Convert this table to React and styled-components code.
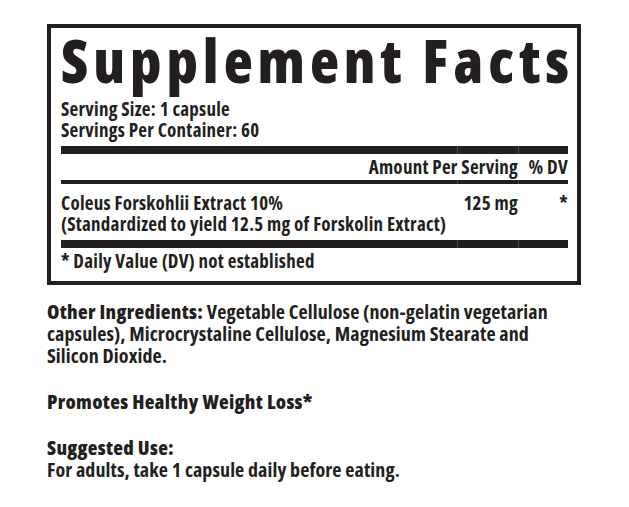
import React from 'react'
import styled, {createGlobalStyle} from 'styled-components'

const ink = '#231f20'
const seam = '#4a4648'

const Global = createGlobalStyle`
  body {
    margin: 0;
    background: #fff;
    color: ${ink};
    font-family: "Open Sans", "Liberation Sans", sans-serif;
    font-stretch: condensed;
  }
`

const Page = styled.div`
  padding: 24px 0 0 47px;
  width: 534px;
`

const Panel = styled.div`
  border: 4px solid ${ink};
  padding: 2px 9px 9px 10px;
`

const Title = styled.h1`
  margin: 0;
  font-size: 60px;
  line-height: 60px;
  font-weight: 800;
  letter-spacing: 5px;
  white-space: nowrap;
`

const Serving = styled.div`
  margin-top: 9px;
  font-size: 19px;
  line-height: 21px;
  font-weight: 700;
  letter-spacing: 0.25px;
`

// thick and thin rules, with the faint column seams the print shows
const Bar = styled.div`
  height: ${p => p.h}px;
  margin: ${p => p.m || '0'};
  background: linear-gradient(
    to right,
    ${ink} calc(100% - 111px),
    ${seam} calc(100% - 111px),
    ${seam} calc(100% - 110px),
    ${ink} calc(100% - 110px),
    ${ink} calc(100% - 50px),
    ${seam} calc(100% - 50px),
    ${seam} calc(100% - 49px),
    ${ink} calc(100% - 49px)
  );
`

const Table = styled.div`
  display: grid;
  grid-template-columns: minmax(0, 1fr) 160px 50px;
  font-size: 19px;
  line-height: 21px;
  font-weight: 700;
  letter-spacing: 0.25px;
`

const Cell = styled.div`
  text-align: ${p => (p.right ? 'right' : 'left')};
  white-space: nowrap;
`

const Note = styled.div`
  font-size: 19px;
  line-height: 21px;
  font-weight: 700;
  letter-spacing: 0.25px;
`

const Info = styled.div`
  margin-top: 16px;
  font-size: 20px;
  line-height: 22px;
  font-weight: 700;
  letter-spacing: 0.1px;
`

const Para = styled.p`
  margin: 0 0 24px;
  white-space: nowrap;
`

const Label = styled.span`
  font-weight: 800;
  letter-spacing: 0.3px;
`

export default function App() {
  return (
    <Page>
      <Global/>
      <Panel>
        <Title>Supplement Facts</Title>
        <Serving>
          Serving Size: 1 capsule<br/>
          Servings Per Container: 60
        </Serving>
        <Bar h={8} m="5px 0 3px"/>
        <Table>
          <Cell/>
          <Cell right>Amount Per Serving</Cell>
          <Cell right>% DV</Cell>
        </Table>
        <Bar h={4} m="2px 0 9px"/>
        <Table>
          <Cell>
            Coleus Forskohlii Extract 10%<br/>
            (Standardized to yield 12.5 mg of Forskolin Extract)
          </Cell>
          <Cell right>125 mg</Cell>
          <Cell right>*</Cell>
        </Table>
        <Bar h={8} m="5px 0 3px"/>
        <Note>* Daily Value (DV) not established</Note>
      </Panel>
      <Info>
        <Para>
          <Label>Other Ingredients:</Label> Vegetable Cellulose (non-gelatin vegetarian<br/>
          capsules), Microcrystaline Cellulose, Magnesium Stearate and<br/>
          Silicon Dioxide.
        </Para>
        <Para>
          <Label>Promotes Healthy Weight Loss*</Label>
        </Para>
        <Para>
          <Label>Suggested Use:</Label><br/>
          For adults, take 1 capsule daily before eating.
        </Para>
      </Info>
    </Page>
  )
}
